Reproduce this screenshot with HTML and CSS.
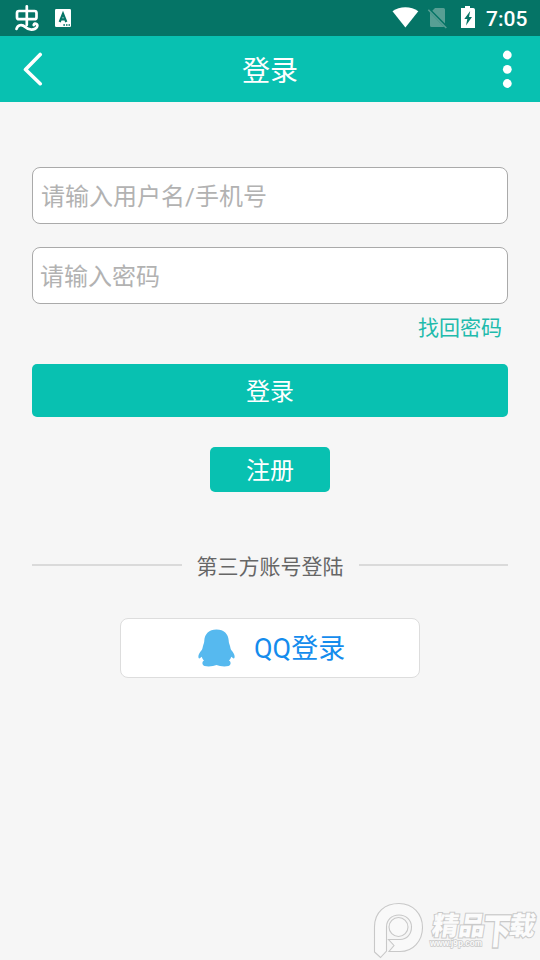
FILE: index.html
```html
<!DOCTYPE html>
<html lang="zh-CN">
<head>
<meta charset="utf-8">
<title>登录</title>
<link rel="stylesheet" href="styles.css">
</head>
<body>
<div class="screen">
  <div class="status">
    <svg class="status-left" width="90" height="36" viewBox="0 0 90 36" fill="none">
      <g stroke="#fff" stroke-width="2.7" stroke-linecap="round" stroke-linejoin="round">
        <rect x="17" y="11" width="19.5" height="8.2" rx="2"/>
        <path d="M26.8 6.3V25M16.5 29C17.5 24.8 22 23.8 25.2 27C28.5 30.2 34.5 30.5 36.8 27.2C38.5 24.3 34.8 21.9 33.7 25"/>
      </g>
      <rect x="55" y="9" width="16" height="18" rx="1.2" fill="#fff"/>
      <path d="M59.7 22L63 13.7L66.3 22M61 19.3H65" stroke="#057466" stroke-width="2.2"/>
      <path d="M63.3 25H65M66 25H67.5M68.5 25H70" stroke="#057466" stroke-width="1.3"/>
    </svg>
    <div class="status-right">
      <svg width="94" height="36" viewBox="0 0 94 36">
        <path d="M.5 11.2C7.5 5.9 19.3 5.9 26.3 11.2L13.4 27.5Z" fill="#fff"/>
        <path d="M43 8H51.5Q53 8 53 9.5V23.5L40.3 10.7ZM38 12.5L52.3 27H39.5Q38 27 38 25.5Z" fill="#579f94"/>
        <path d="M36.3 9.8L54.3 28" stroke="#579f94" stroke-width="1.6"/>
        <path d="M69 8H73V6H78V8H81.2Q83 8 83 9.8V28H69Z" fill="#fff"/>
        <path d="M78.2 11L72.3 19H75.3L74 25.5L80 17H77Z" fill="#057466"/>
      </svg>
      <span class="clock">7:05</span>
    </div>
  </div>
  <header class="bar">
    <svg width="20" height="34" viewBox="0 0 20 34" fill="none" stroke="#fff" stroke-width="3.6" stroke-linecap="round" stroke-linejoin="round"><path d="M17.2 2.5L2.5 17.5L17.2 31.7"/></svg>
    <h1>登录</h1>
    <svg width="10" height="38" viewBox="0 0 10 38" fill="#fff"><circle cx="5.3" cy="5" r="4.4"/><circle cx="5.3" cy="19.3" r="4.4"/><circle cx="5.3" cy="33.5" r="4.4"/></svg>
  </header>
  <main>
    <div class="field">请输入用户名/手机号</div>
    <div class="field password">请输入密码</div>
    <a class="forgot">找回密码</a>
    <div class="btn login">登录</div>
    <div class="btn register">注册</div>
    <div class="divider"><span>第三方账号登陆</span></div>
    <div class="qq">
      <svg width="38" height="40" viewBox="0 0 38 40" fill="#56b9ef"><path d="M18.5 1.5C11 1.5 6.7 6 6.3 12.5C6.3 14.5 5.6 16 5 18C4.6 19.5 4.6 20.5 3.8 22C1.2 25 -.2 27.5 .6 30C1.3 31 2.5 29.8 3.8 28.8C4.3 30.5 5 31.7 6 32.6C4 33.5 3.6 37 6.5 38C10.5 39 15.5 38.3 18.5 37C21.5 38.3 26.5 39 30.5 38C33.4 37 33 33.5 31 32.6C32 31.7 32.7 30.5 33.2 28.8C34.5 29.8 35.7 31 36.4 30C37.2 27.5 35.8 25 33.2 22C32.4 20.5 32.4 19.5 32 18C31.4 16 30.7 14.5 30.7 12.5C30.3 6 26 1.5 18.5 1.5Z"/></svg>
      <span>QQ登录</span>
    </div>
  </main>
  <svg class="watermark" width="170" height="60" viewBox="370 900 170 60">
    <g fill="#f9f9f9" stroke="#c8c8c8" stroke-width="1.1">
      <path d="M374.5 952V927C374.5 912 385 903.5 399 903.5C413 903.5 422.5 914 422.5 927.5C422.5 941 413 951.5 400 951.5H389L394 945.5L388.5 939.5H400C407 939.5 411.5 934 411.5 927C411.5 920 406 915 399 915C391.5 915 386.5 920 386.5 927V951L380.5 957.5Z"/>
      <circle cx="398.5" cy="927" r="9.5"/>
    </g>
    <g class="mark-text">
      <text class="mark-name" transform="translate(431 935) skewX(-9) scale(1.02 1)">精品</text>
      <text class="mark-name" transform="translate(482 944) skewX(-5) scale(1.08 1.4)">下</text>
      <text class="mark-name" transform="translate(508 935) skewX(-9)">载</text>
      <text class="mark-url" x="430" y="946" textLength="52" lengthAdjust="spacingAndGlyphs">www.j9p.com</text>
    </g>
  </svg>
</div>
</body>
</html>
```
FILE: styles.css
```css
* { box-sizing: border-box; }
body { margin: 0; background: #f6f6f6; font-family: Roboto, "Noto Sans CJK SC", sans-serif; }
.screen { position: relative; width: 540px; height: 960px; overflow: hidden; background: #f6f6f6; }
svg { display: block; flex: none; }
.status { height: 36px; background: #057466; display: flex; justify-content: space-between; }
.status-right { display: flex; padding-right: 12px; }
.clock { color: #fff; font-size: 21px; font-weight: 500; line-height: 38px; width: 42px; white-space: nowrap; }
.bar { height: 66px; background: #08c1b1; display: flex; align-items: center; justify-content: space-between; padding: 0 28px 0 23px; }
h1 { margin: 0; padding: 6px 5px 0 0; color: #fff; font-size: 28px; font-weight: 400; line-height: 60px; }
main { padding: 65px 32px 0; }
.field { height: 57px; border: 1px solid #aaa; border-radius: 8px; background: #fff; color: #b2b2b2; font-size: 24px; line-height: 58px; padding-left: 8px; }
.password { margin-top: 23px; padding-left: 7px; }
.forgot { display: block; height: 60px; padding-right: 6px; text-align: right; font-size: 21px; line-height: 48px; color: #1fbbac; }
.btn { background: #08c1b1; color: #fff; border-radius: 5px; text-align: center; font-size: 24px; }
.login { height: 53px; line-height: 57px; }
.register { width: 120px; height: 45px; line-height: 48px; margin: 30px auto 0; }
.divider { display: flex; align-items: center; gap: 15px; margin-top: 58px; height: 30px; font-size: 21px; line-height: 30px; color: #666; white-space: nowrap; }
.divider span { padding-top: 4px; }
.divider::before, .divider::after { content: ""; flex: 1; height: 2px; background: #dadada; }
.qq { width: 300px; height: 60px; margin: 38px auto 0; border: 1px solid #ddd; border-radius: 8px; background: #fff; display: flex; align-items: center; padding-left: 77px; gap: 18px; font-size: 27px; color: #148ced; }
.qq span { padding-bottom: 4px; }
.watermark { position: absolute; left: 370px; top: 900px; }
.mark-text { fill: #fbfbfb; stroke: #cacaca; paint-order: stroke; }
.mark-name { font: 900 26px "Noto Sans CJK SC", sans-serif; stroke-width: 2px; }
.mark-url { font: bold 9px "Liberation Sans", sans-serif; stroke-width: 1.6px; }
```
